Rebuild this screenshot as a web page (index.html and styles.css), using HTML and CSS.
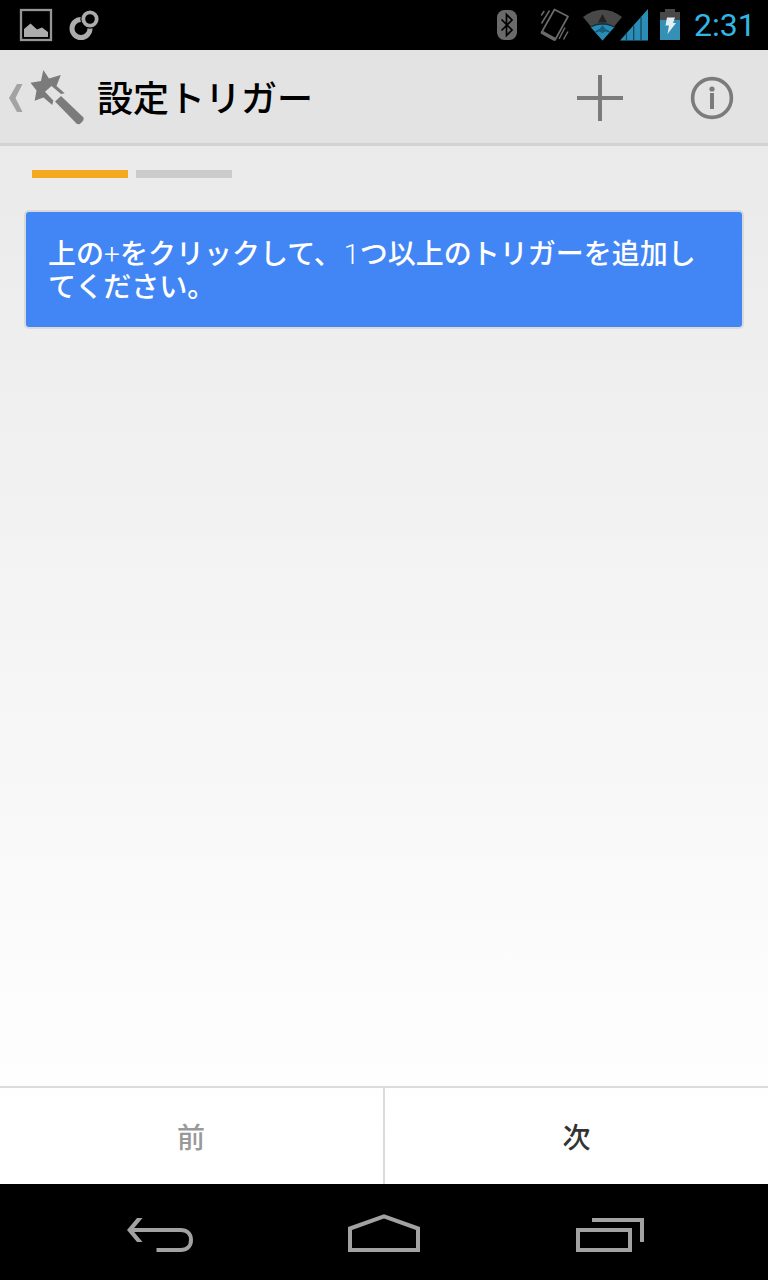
FILE: index.html
```html
<!DOCTYPE html>
<html lang="ja">
<head>
<meta charset="utf-8">
<title>設定トリガー</title>
<link rel="stylesheet" href="styles.css">
</head>
<body>
<div class="screen">
  <header class="status-bar">
    <svg class="status-left" width="110" height="50" viewBox="0 0 110 50">
      <rect x="21" y="10" width="30" height="30" fill="none" stroke="#969696" stroke-width="2.300"/>
      <path d="M24 37V29l6.5-5.500 6.500 6 5-2L48 32v5z" fill="#acacac"/>
      <circle cx="81" cy="28.500" r="9" fill="none" stroke="#acacac" stroke-width="5"/>
      <circle cx="90" cy="19" r="9.700" fill="#000"/>
      <circle cx="90" cy="19" r="6.700" fill="none" stroke="#acacac" stroke-width="3.800"/>
    </svg>
    <div class="status-right">
      <svg width="194" height="50" viewBox="490 0 194 50">
        <rect x="497" y="10" width="20" height="30" rx="7.500" fill="#6a6a6a"/>
        <path d="M501.500 19.500 512 30l-5.500 5.500V14.500L512 20l-10.500 10.500" fill="none" stroke="#000" stroke-width="1.700"/>
        <g fill="none" stroke="#6a6a6a">
          <path d="M554.500 9.500 568 16.500 555 40 541.500 32.500z" stroke-width="1.700" stroke-linejoin="round"/>
          <path d="M541.500 32 555 39.500" stroke-width="3.500"/>
          <path d="M541.300 15.500 544.200 11M541.500 23.500 549.500 10.500M559 39 565 27.500M563.500 39.500 568 31.500" stroke-width="1.500"/>
        </g>
        <path d="M583 17Q602.500 2.500 622 17L602.500 40.500z" fill="#484848"/>
        <path d="M590.500 27Q602.500 22 614.500 27L602.500 40.500z" fill="#278db7"/>
        <path d="M602.500 14 607 22.500H598z" fill="#222"/>
        <path d="M590.500 27Q602.500 20.500 614.500 27" fill="none" stroke="#12333f" stroke-width="1.300"/>
        <path d="M595 32.500Q602.500 26.500 610 32.500" fill="none" stroke="#12506b" stroke-width="1.300"/>
        <path d="M602.500 25 607 31 602.500 33 598 31z" fill="#19607f"/>
        <path d="M620 40.500 648 9V40.500z" fill="#2b8db5"/>
        <path d="M626.500 33.500v7M633.700 25.500v15M641 17v23.500" stroke="#104a63" stroke-width="1.300"/>
        <path d="M660 20V12h5V9h10v3h5v8z" fill="#484848"/>
        <path d="M660 20h20v20h-20z" fill="#3590b5"/>
        <path d="M667 17.500h8L673 23h3L667.500 34l1.500-8.500H665.500z" fill="#e2f0f5"/>
      </svg>
      <span class="clock">2:31</span>
    </div>
  </header>
  <div class="action-bar">
    <svg class="up-icon" width="88" height="93" viewBox="0 50 88 93">
      <path d="M17 84h5.500l-7 14 7 14H17L9 98z" fill="#a3a3a3"/>
      <path d="M43.300 70 49 78.500 60.800 75 56.500 86 64.700 93.300 61 94 51.500 86 45 91.700 53.300 100.500 52.300 105 43.500 97.500 34.700 100.700 36.500 90.500 30.500 82.700 41 81z" fill="#7b7b7b"/>
      <path d="M61 96 83.500 117.500Q84.300 119.500 82 122L79.500 124.200 77 124 55 101.500z" fill="#7b7b7b"/>
    </svg>
    <h1 class="title">設定トリガー</h1>
    <div class="actions">
      <svg width="112" height="93" viewBox="544 50 112 93">
        <path d="M577 98h46M600 75v46" stroke="#7b7b7b" stroke-width="4"/>
      </svg>
      <svg width="112" height="93" viewBox="656 50 112 93">
        <circle cx="712" cy="98" r="19.400" fill="none" stroke="#7b7b7b" stroke-width="3.600"/>
        <circle cx="712" cy="89" r="2.600" fill="#7b7b7b"/>
        <path d="M712 93v16" stroke="#7b7b7b" stroke-width="4"/>
      </svg>
    </div>
  </div>
  <main class="content">
    <div class="steps"><span class="step active"></span><span class="step"></span></div>
    <p class="card">上の<span class="latin">+</span>をクリックして、<span class="latin digit">1</span>つ以上のトリガーを追加し<br>てください。</p>
  </main>
  <div class="button-bar">
    <div class="button disabled">前</div>
    <div class="button">次</div>
  </div>
  <footer class="nav-bar">
    <svg width="768" height="96" viewBox="0 1184 768 96" fill="none" stroke="#a2a2a2" stroke-width="4">
      <path d="M132 1230H180.500C187 1230 191 1234 191 1240S187 1250 180.500 1250H156.500"/>
      <path d="M137 1218h5.500L132.500 1230l10 12H137L127 1230z" fill="#a2a2a2" stroke="none"/>
      <path d="M350 1250V1228.500L384 1216.300 418 1228.500V1250z"/>
      <path d="M578 1230h52v20h-52zM592 1220h50v22"/>
    </svg>
  </footer>
</div>
</body>
</html>
```
FILE: styles.css
```css
* {
  box-sizing: border-box;
}

body {
  margin: 0;
  background: #000;
  font-family: "Noto Sans CJK JP", sans-serif;
}

svg {
  display: block;
  flex: none;
}

.screen {
  display: flex;
  flex-direction: column;
  width: 768px;
  height: 1280px;
  overflow: hidden;
  background: linear-gradient(#e8e8e8 50px, #fff 1130px);
}

.status-bar {
  display: flex;
  justify-content: space-between;
  flex: none;
  height: 50px;
  background: #000;
}

.status-right {
  display: flex;
  width: 278px;
}

.clock {
  padding-left: 10px;
  color: #33b5e5;
  font-family: Roboto, sans-serif;
  font-size: 32px;
  line-height: 51px;
  white-space: nowrap;
}

.action-bar {
  display: flex;
  flex: none;
  height: 96px;
  background: #e3e3e3;
  border-bottom: 3px solid #d3d3d3;
}

.title {
  margin: 0;
  padding-left: 9px;
  color: #000;
  font-size: 36px;
  font-weight: 500;
  line-height: 92px;
}

.actions {
  display: flex;
  margin-left: auto;
}

.content {
  flex: 1;
  padding: 24px 24px 0;
}

.steps {
  display: flex;
  gap: 8px;
  padding-left: 8px;
}

.step {
  width: 96px;
  height: 8px;
  background: #cbcbcb;
}

.step.active {
  background: #f4a91e;
}

.card {
  height: 119px;
  margin: 32px 0 0;
  padding: 24px 22px 0;
  border: 2px solid rgba(0, 0, 0, 0.08);
  border-radius: 5px;
  background: #4286f5;
  background-clip: padding-box;
  color: #fff;
  font-size: 28px;
  font-weight: 500;
  line-height: 33px;
  white-space: nowrap;
}

.latin {
  display: inline-block;
  width: 16px;
  font-family: Roboto, sans-serif;
  font-weight: 300;
  line-height: 1;
}

.latin.digit {
  width: 18px;
  padding-left: 2px;
}

.button-bar {
  display: flex;
  flex: none;
  height: 98px;
  border-top: 2px solid #dbdbdb;
}

.button {
  flex: 1;
  color: #333;
  font-size: 28px;
  font-weight: 500;
  line-height: 96px;
  text-align: center;
}

.button.disabled {
  flex: 0 0 385px;
  padding-right: 1px;
  border-right: 2px solid #dbdbdb;
  color: #999;
}

.nav-bar {
  flex: none;
  height: 96px;
  background: #000;
}
```
